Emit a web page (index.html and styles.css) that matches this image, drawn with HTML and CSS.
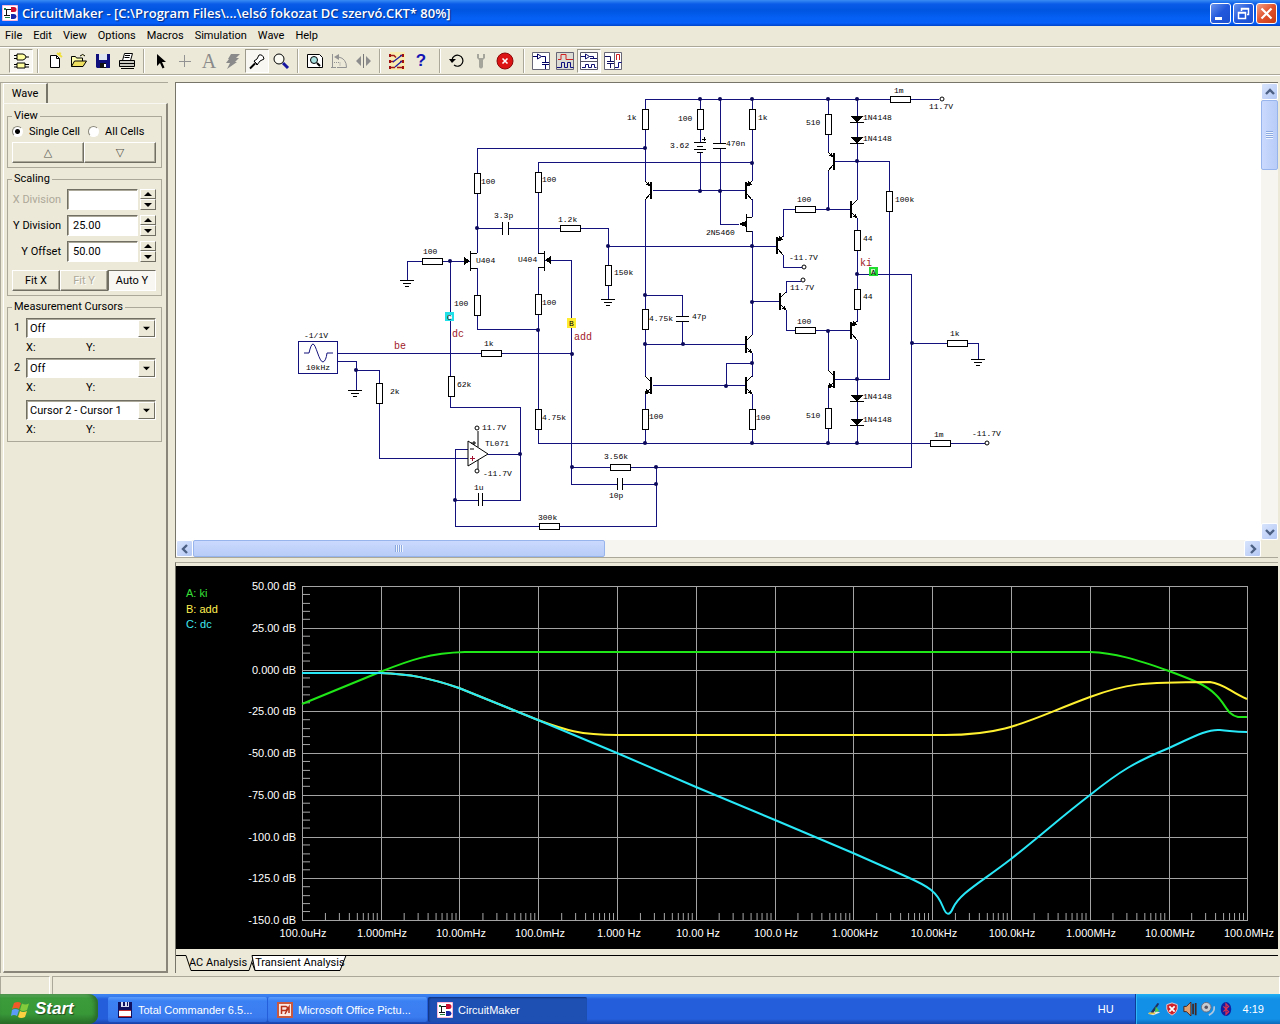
FILE: index.html
```html
<!DOCTYPE html>
<html lang="en">
<head>
<meta charset="utf-8">
<title>CircuitMaker</title>
<link rel="stylesheet" href="styles.css">
</head>
<body>
<svg class="defs" width="0" height="0" aria-hidden="true">
  <defs>
    <symbol id="logo" viewBox="0 0 16 16"><path fill="#fff" stroke="#f9b8d8" d="M.5.5h15v15H.5z"/><path d="M2 4.500h8M4.500 4v7M2 10.500h6" stroke="#111" fill="none"/><path d="M9 2h3a2.500 2.500 0 0 1 0 5H9z" fill="#d01030"/><path d="M9 9h3a2.500 2.500 0 0 1 0 5H9z" fill="#1828a8"/><path d="M2 3h2v2H2zM3 12h5v1H3z" fill="#208040"/></symbol>
    <symbol id="up" viewBox="0 0 8 8"><path d="M0 6h8L4 2z"/></symbol>
    <symbol id="down" viewBox="0 0 8 8"><path d="M0 2h8L4 6z"/></symbol>
    <symbol id="chev" viewBox="0 0 10 10"><path d="M1 7l4-4 4 4" fill="none" stroke="#4d6185" stroke-width="2.400"/></symbol>
  </defs>
</svg>

<header class="titlebar">
  <svg class="ico16"><use href="#logo"/></svg>
  <h1>CircuitMaker - [C:\Program Files\...\első fokozat DC szervó.CKT* 80%]</h1>
  <div class="winbtns">
    <button aria-label="Minimize"><svg width="19" height="19"><path d="M4 13h7v3H4z" fill="#fff"/></svg></button>
    <button aria-label="Restore"><svg width="19" height="19" fill="none" stroke="#fff"><path d="M4.500 8.500h7v6h-7zM4 9h8M7.500 7V4.500h7v6H13M7 5h8" stroke-width="1.500"/></svg></button>
    <button class="close" aria-label="Close"><svg width="19" height="19"><path d="M4.500 4.500l10 10M14.500 4.500l-10 10" stroke="#fff" stroke-width="2.200"/></svg></button>
  </div>
</header>

<nav class="menubar">
  <a href="#">File</a><a href="#">Edit</a><a href="#">View</a><a href="#">Options</a><a href="#">Macros</a><a href="#">Simulation</a><a href="#">Wave</a><a href="#">Help</a>
</nav>

<div class="toolbar" role="toolbar" aria-label="Tools">
  <button class="on" aria-label="Parts"><svg viewBox="0 0 18 18"><path d="M5 2h6q3 1 3 3t-3 3H5zM5 11h8v5H5z" fill="#ffffa0" stroke="#000"/><path d="M2 3.500h3M2 6.500h3M14 5h3M2 12.500h3M2 15h3M13 12.500h4M13 15h4" stroke="#000"/></svg></button>
  <i class="sep"></i>
  <button aria-label="New"><svg viewBox="0 0 18 18"><path d="M11 1l5 4M13 1l2 1" stroke="#f0e040" stroke-width="2"/><path d="M4.500 3.500h6l3 3v9h-9z" fill="#fff" stroke="#000"/><path d="M10.500 3.500v3h3" fill="none" stroke="#000"/></svg></button>
  <button aria-label="Open"><svg viewBox="0 0 18 18"><path d="M1.500 14.500v-10h4l1 1.500h6v3M10 4q3-3 5 0" fill="#ffffb0" stroke="#000"/><path d="M1.500 14.500l3-5.500h12l-3.500 5.500z" fill="#f0e060" stroke="#000"/></svg></button>
  <button aria-label="Save"><svg viewBox="0 0 18 18"><path d="M2 2h14v14H3l-1-1z" fill="#10107c"/><path d="M5 2h8v6H5z" fill="#dfe6f0"/><path d="M6 11h6v5H6z" fill="#111"/><path d="M10 12h2v3h-2z" fill="#fff"/></svg></button>
  <button aria-label="Print"><svg viewBox="0 0 18 18"><path d="M4.500 8.500l2-7h8l-2 7z" fill="#fff" stroke="#000"/><path d="M1.500 8.500h15v6h-15z" fill="#c8c8c0" stroke="#000"/><path d="M7 3.500h5M6.500 5.500h5M2 11.500h14M3 16.500h13" stroke="#000"/></svg></button>
  <i class="sep"></i>
  <button aria-label="Arrow"><svg viewBox="0 0 18 18"><path d="M5 2v12l3-3 2.500 5.500 2-1L10 10h4z"/></svg></button>
  <button aria-label="Wire"><svg viewBox="0 0 18 18"><path d="M8.500 3v12M3 9.500h12" stroke="#929292"/></svg></button>
  <button class="letter" aria-label="Text">A</button>
  <button aria-label="Delete"><svg viewBox="0 0 18 18"><path d="M7 2h9l-4 4h3l-4 4h2L3 17l3-6H2l3-4H4z" fill="#8a8a8a"/></svg></button>
  <button class="on" aria-label="Probe"><svg viewBox="0 0 18 18"><path d="M2 16.500l5-5" stroke="#000" stroke-width="2"/><path d="M6 9l3-2 2-4q4-1 5 4l-4 2-3 4z" fill="#fff" stroke="#000"/><path d="M6 9l4 4" stroke="#000"/></svg></button>
  <button aria-label="Zoom"><svg viewBox="0 0 18 18"><path d="M11 11l5 5" stroke="#1515a0" stroke-width="3"/><circle cx="7" cy="7" r="5" fill="#fbfbf4" stroke="#000"/></svg></button>
  <i class="sep"></i>
  <button aria-label="Fit"><svg viewBox="0 0 18 18"><path d="M1.500 2.500h12l3 3v10h-15z" fill="#fff" stroke="#000"/><circle cx="8" cy="8" r="3.500" fill="#a8e0e0" stroke="#000"/><path d="M11 11l3 3" stroke="#000" stroke-width="2"/></svg></button>
  <button aria-label="Rotate"><svg viewBox="0 0 18 18"><path d="M2.500 2v13.500M1 15.500h5M7 15.500h9.500q0-9-8-10.500" fill="none" stroke="#939393"/><path d="M4 5l5-3v6z" fill="#939393"/><path d="M4 10.500h6v4" fill="none" stroke="#939393" stroke-dasharray="1 1"/></svg></button>
  <button aria-label="Mirror"><svg viewBox="0 0 18 18"><path d="M7 4v10L2 9zM12 4v10l5-5z" fill="#8d8d8d"/><path d="M9.500 2v14" stroke="#777"/></svg></button>
  <i class="sep"></i>
  <button aria-label="Digital options"><svg viewBox="0 0 18 18"><path d="M2 0h15v18H2z" fill="#f8ecb0"/><path d="M2 3.500h4l2 2M2 9.500h4M2 15.500h5M12 3.500h4M12 9.500h4M9 15.500h7" fill="none" stroke="#a01818" stroke-width="1.500"/><path d="M5 10l9-7M7 15l7-6" stroke="#2020a0" stroke-width="1.300"/><path d="M14 2h2v3h-2zM14 8h2v3h-2zM14 14h2v3h-2zM1 2h2v3H1zM1 8h2v3H1zM1 14h2v3H1z" fill="#a01010"/></svg></button>
  <button class="help" aria-label="Help">?</button>
  <i class="sep wide"></i>
  <button aria-label="Reset"><svg viewBox="0 0 18 18"><path d="M4 8a5.500 5.500 0 1 1 2 5" fill="none" stroke="#000" stroke-width="1.200"/><path d="M1 7h7l-4 4z"/></svg></button>
  <button aria-label="Step"><svg viewBox="0 0 18 18"><path d="M5 2v4l2 2v7q2 3 4 0V8l2-2V2h-2v4H7V2z" fill="#a5a59c"/></svg></button>
  <button aria-label="Stop"><svg viewBox="0 0 18 18"><circle cx="9" cy="9" r="8" fill="#dc1414" stroke="#8c0808"/><path d="M6.500 6.500l5 5M11.500 6.500l-5 5" stroke="#fff" stroke-width="1.600"/></svg></button>
  <i class="sep wide"></i>
  <button aria-label="Schematic"><svg viewBox="0 0 18 18"><path d="M.5.500h17v17H.5z" fill="#fff" stroke="#667"/><path d="M1 4.500h4M5.500 2v5l4-2.500zM9.500 4.500h4v6M10 10.500h7M10 12.500h7M13.500 13v4" fill="none" stroke="#000064"/></svg></button>
  <button aria-label="Waveforms"><svg viewBox="0 0 18 18"><path d="M.5.500h17v17H.5z" fill="#dcdcd4" stroke="#667"/><path d="M2 7.500h3v-5h5v5h7" fill="none" stroke="#d02020"/><path d="M1 15.500h4.500v-5h3v5h3v-5h3v5h3" fill="none" stroke="#101080"/></svg></button>
  <button class="on" aria-label="Split horizontally"><svg viewBox="0 0 18 18"><path d="M.5.500h17v17H.5zM0 9.500h18" fill="#fff" stroke="#556"/><path d="M1 4.500h4M5.500 2v5l4-2.500zM9.500 4.500h4v2M10 6.500h7M2 15.500h3.500v-3h3v3h3v-3h3v3h2" fill="none" stroke="#101070"/></svg></button>
  <button aria-label="Split vertically"><svg viewBox="0 0 18 18"><path d="M.5.500h17v17H.5zM10.500 0v18" fill="#fff" stroke="#667"/><path d="M1 4.500h5.500v5M3 9.500h7M3 11.500h7M6.500 12v4" fill="none" stroke="#101060"/><path d="M12.500 8V2.500h3V8" fill="none" stroke="#d02020"/><path d="M11 15.500h3.500v-5h3" fill="none" stroke="#101080"/></svg></button>
</div>

<main class="work">
  <aside class="side">
    <div class="tabrow"><button class="tab">Wave</button></div>
    <div class="panel">
      <fieldset>
        <legend>View</legend>
        <div class="radios">
          <label><input type="radio" name="cells" checked>Single Cell</label>
          <label><input type="radio" name="cells">All Cells</label>
        </div>
        <div class="pair"><button class="btn" aria-label="Previous cell">△</button><button class="btn" aria-label="Next cell">▽</button></div>
      </fieldset>
      <fieldset>
        <legend>Scaling</legend>
        <div class="rows">
          <div class="row off"><label for="xd">X Division</label><input id="xd" type="text" disabled><span class="spin"><button aria-label="X up"><svg><use href="#up"/></svg></button><button aria-label="X down"><svg><use href="#down"/></svg></button></span></div>
          <div class="row"><label for="yd">Y Division</label><input id="yd" type="text" value="25.00"><span class="spin"><button aria-label="Y up"><svg><use href="#up"/></svg></button><button aria-label="Y down"><svg><use href="#down"/></svg></button></span></div>
          <div class="row"><label for="yo">Y Offset</label><input id="yo" type="text" value="50.00"><span class="spin"><button aria-label="Offset up"><svg><use href="#up"/></svg></button><button aria-label="Offset down"><svg><use href="#down"/></svg></button></span></div>
        </div>
        <div class="pair fit"><button class="btn">Fit X</button><button class="btn" disabled>Fit Y</button><button class="btn down">Auto Y</button></div>
      </fieldset>
      <fieldset class="cursors">
        <legend>Measurement Cursors</legend>
        <div class="cur"><label for="c1">1</label><span class="combo"><select id="c1"><option>Off</option></select><svg><use href="#down"/></svg></span></div>
        <div class="xy"><span>X:</span><span>Y:</span></div>
        <div class="cur"><label for="c2">2</label><span class="combo"><select id="c2"><option>Off</option></select><svg><use href="#down"/></svg></span></div>
        <div class="xy"><span>X:</span><span>Y:</span></div>
        <div class="cur diff"><span></span><span class="combo"><select aria-label="Difference"><option>Cursor 2 - Cursor 1</option></select><svg><use href="#down"/></svg></span></div>
        <div class="xy"><span>X:</span><span>Y:</span></div>
      </fieldset>
    </div>
  </aside>

  <section class="docs">
    <div class="sheet">
      <div class="canvas">
      <svg class="schem" width="1085" height="457" viewBox="176 83 1085 457">
        <defs>
          <g id="rv"><path d="M-3-10h6v20h-6z"/></g>
          <g id="rh"><path d="M-10-3h20v6h-20z"/></g>
          <g id="gnd"><path d="M-7 0H7M-4 3H4M-2 6H2"/></g>
          <g id="npn"><path d="M1-4L6-9M1 4l5 5"/><path class="ink" d="M-1-8h2V9h-2zM6 9L1 8l4-4z"/></g>
          <g id="pnp"><path d="M1-4L6-9M1 4l5 6"/><path class="ink" d="M-1-8h2V9h-2zM1-4l1-5 4 4z"/></g>
          <g id="dio"><path class="ink" d="M-6-3H6L1 3h6v1H-7V3h6z"/></g>
          <circle id="n" r="2"/>
        </defs>
        <g class="wire">
          <path d="M477 253V148H645M538 253V162H752M477 268V329H538M538 267V443H985M477 228H502M508 228H608V299M608 246H777M407 280V261H470M450 261V407H520V500H482M478 500H455M468 449H455V526H656V467M338 353H572M338 361H356V390M356 370H379V458H468M488 454H520M545 260H571V484H617M622 484H656M572 467H911V274H857"/>
          <path d="M645 181V99H939M700 99V142M700 152V190M720 99V143M720 148V224H739M752 99V181M752 199V217M752 231V335M653 190H746M645 199V377M645 394V443M645 295H682V316M682 321V344M645 344H746M752 353V377M752 363H726V386M653 385H746M752 394V443"/>
          <path d="M783 237V209H850M783 255V267H802M786 293V281H801M786 310V330H850M752 301H779M828 99V152M828 170V209M834 161H889V379H834M857 99V200M857 218V322M857 340V443M828 330V370M828 388V443M911 343H978V359"/>
          <path class="box" d="M298 341h39v32h-39z"/>
        </g>
        <g class="curve"><path d="M304 353h5q2-9 4-9c3 0 6 18 10 18q3-1 4-9h6"/></g>
        <g class="dots">
          <use href="#n" x="477" y="228"/><use href="#n" x="450" y="261"/><use href="#n" x="538" y="330"/><use href="#n" x="572" y="354"/><use href="#n" x="356" y="370"/><use href="#n" x="520" y="454"/><use href="#n" x="455" y="500"/><use href="#n" x="572" y="467"/><use href="#n" x="656" y="467"/><use href="#n" x="656" y="484"/><use href="#n" x="608" y="246"/><use href="#n" x="645" y="148"/><use href="#n" x="700" y="99"/><use href="#n" x="720" y="99"/><use href="#n" x="752" y="99"/><use href="#n" x="828" y="99"/><use href="#n" x="857" y="99"/><use href="#n" x="752" y="163"/><use href="#n" x="700" y="191"/><use href="#n" x="720" y="191"/><use href="#n" x="752" y="246"/><use href="#n" x="752" y="302"/><use href="#n" x="645" y="295"/><use href="#n" x="645" y="344"/><use href="#n" x="683" y="344"/><use href="#n" x="752" y="363"/><use href="#n" x="726" y="386"/><use href="#n" x="645" y="443"/><use href="#n" x="752" y="443"/><use href="#n" x="828" y="443"/><use href="#n" x="857" y="443"/><use href="#n" x="828" y="209"/><use href="#n" x="828" y="331"/><use href="#n" x="857" y="161"/><use href="#n" x="857" y="274"/><use href="#n" x="857" y="379"/><use href="#n" x="912" y="343"/>
        </g>
        <g class="parts">
          <use href="#rv" x="477" y="183"/><use href="#rv" x="538" y="182"/><use href="#rv" x="477" y="305"/><use href="#rv" x="538" y="304"/><use href="#rv" x="608" y="275"/><use href="#rv" x="451" y="386"/><use href="#rv" x="379" y="393"/><use href="#rv" x="538" y="419"/><use href="#rv" x="645" y="119"/><use href="#rv" x="700" y="119"/><use href="#rv" x="752" y="119"/><use href="#rv" x="828" y="124"/><use href="#rv" x="889" y="201"/><use href="#rv" x="857" y="240"/><use href="#rv" x="857" y="299"/><use href="#rv" x="645" y="319"/><use href="#rv" x="645" y="419"/><use href="#rv" x="752" y="419"/><use href="#rv" x="828" y="418"/>
          <use href="#rh" x="432" y="261"/><use href="#rh" x="570" y="228"/><use href="#rh" x="491" y="353"/><use href="#rh" x="620" y="467"/><use href="#rh" x="549" y="526"/><use href="#rh" x="900" y="99"/><use href="#rh" x="805" y="209"/><use href="#rh" x="805" y="330"/><use href="#rh" x="957" y="343"/><use href="#rh" x="940" y="443"/>
          <use href="#gnd" x="407" y="280"/><use href="#gnd" x="608" y="299"/><use href="#gnd" x="355" y="390"/><use href="#gnd" x="978" y="359"/>
          <path d="M502 222v13M508 222v13M478 493v13M482 493v13M617 478v12M622 478v12M713 143h13M713 148h13M676 316h13M676 321h13M694 142h12M697 146h6M694 149h12M697 152h6M702 139h4M704 137v4"/>
          <path d="M470 251v20M470 253h7M470 268h7M544 251v20M544 253h-6M544 267h-6M746 214v18M746 217h6M746 231h6"/>
          <path class="ink" d="M464 257l6 4-6 4zM551 256l-6 4 6 4zM739 224l7-3v6z"/>
          <path class="smooth" d="M468 441v25l20-12zM478 431v16M478 460v9M471 443h5M474 441v4M470 449h4"/>
          <path class="plus" d="M470 458h5M472 456v5"/>
          <use href="#npn" x="746" y="344"/><use href="#npn" x="746" y="385"/><use href="#npn" x="780" y="301"/><use href="#npn" x="851" y="209"/><use href="#pnp" x="851" y="330"/><use href="#pnp" x="746" y="190"/><use href="#pnp" x="777" y="245"/>
          <use href="#pnp" transform="matrix(-1 0 0 1 651 190)"/><use href="#npn" transform="matrix(-1 0 0 1 651 385)"/><use href="#pnp" transform="matrix(-1 0 0 1 834 161)"/><use href="#npn" transform="matrix(-1 0 0 1 834 379)"/>
          <use href="#dio" x="857" y="119"/><use href="#dio" x="857" y="140"/><use href="#dio" x="857" y="398"/><use href="#dio" x="857" y="422"/>
          <g class="smooth"><circle cx="942" cy="99" r="2"/><circle cx="804" cy="267" r="2"/><circle cx="803" cy="280" r="2"/><circle cx="987" cy="443" r="2"/><circle cx="477" cy="428" r="2"/><circle cx="477" cy="471" r="2"/></g>
        </g>
        <g class="lbl">
          <text x="481" y="184">100</text><text x="542" y="182">100</text><text x="494" y="218">3.3p</text><text x="558" y="222">1.2k</text><text x="423" y="254">100</text><text x="476" y="263">U404</text><text x="518" y="262">U404</text><text x="614" y="275">150k</text><text x="454" y="306">100</text><text x="542" y="305">100</text><text x="304" y="338">-1/1V</text><text x="306" y="370">10kHz</text><text x="484" y="346">1k</text><text x="457" y="387">62k</text><text x="390" y="394">2k</text><text x="542" y="420">4.75k</text><text x="482" y="430">11.7V</text><text x="485" y="446">TL071</text><text x="483" y="476">-11.7V</text><text x="474" y="490">1u</text><text x="604" y="459">3.56k</text><text x="609" y="498">10p</text><text x="538" y="520">300k</text>
          <text x="627" y="120">1k</text><text x="678" y="121">100</text><text x="758" y="120">1k</text><text x="670" y="148">3.62</text><text x="726" y="146">470n</text><text x="806" y="125">510</text><text x="863" y="120">1N4148</text><text x="863" y="141">1N4148</text><text x="894" y="93">1m</text><text x="929" y="109">11.7V</text><text x="706" y="235">2N5460</text><text x="797" y="202">100</text><text x="895" y="202">100k</text><text x="863" y="241">44</text><text x="789" y="260">-11.7V</text><text x="790" y="290">11.7V</text><text x="649" y="321">4.75k</text><text x="692" y="319">47p</text><text x="797" y="324">100</text><text x="863" y="299">44</text><text x="950" y="336">1k</text><text x="649" y="419">100</text><text x="756" y="420">100</text><text x="806" y="418">510</text><text x="863" y="399">1N4148</text><text x="863" y="422">1N4148</text><text x="934" y="437">1m</text><text x="972" y="436">-11.7V</text>
        </g>
        <g class="net"><text x="394" y="349">be</text><text x="452" y="337">dc</text><text x="574" y="340">add</text><text x="860" y="266">ki</text></g>
        <g class="probe">
          <path fill="#22e0e8" d="M445 312h9v9h-9z"/><path fill="#ffec30" d="M567 318h9v10h-9z"/><path fill="#20dc30" d="M869 267h9v9h-9z"/>
          <path fill="#fff" d="M448 315h4v4h-4z"/><path fill="#c8f8c0" d="M871 269h4v5h-4z"/>
          <text x="447" y="320">C</text><text x="569" y="326">B</text><text x="871" y="275">A</text>
        </g>
      </svg>
      </div>
      <div class="vbar"><button aria-label="Scroll up"><svg><use href="#chev"/></svg></button><div class="thumb"></div><button class="end" aria-label="Scroll down"><svg><use href="#chev"/></svg></button></div>
      <div class="hbar"><button aria-label="Scroll left"><svg><use href="#chev"/></svg></button><div class="thumb"></div><button class="end" aria-label="Scroll right"><svg><use href="#chev"/></svg></button></div>
    </div>

    <div class="plotpane">
      <svg class="plot" viewBox="176 566 1102 383">
        <defs>
          <pattern id="dec" x="302" y="913" width="78.750" height="7" patternUnits="userSpaceOnUse"><path d="M23.700 0v7M37.600 0v7M47.400 0v7M55 0v7M61.300 0v7M66.500 0v7M71.100 0v7M75.100 0v7" stroke="#a8a8a8"/></pattern>
          <pattern id="min" x="303" y="586" width="7" height="41.750" patternUnits="userSpaceOnUse"><path d="M0 8.500h7M0 17.500h7M0 25.500h7M0 33.500h7" stroke="#a8a8a8"/></pattern>
        </defs>
        <g class="grid">
          <path d="M302 586H1248M302 628H1248M302 670H1248M302 711H1248M302 753H1248M302 795H1248M302 837H1248M302 878H1248M302 920H1248M302 586V920M381 586V920M459 586V920M538 586V920M617 586V920M696 586V920M775 586V920M853 586V920M932 586V920M1011 586V920M1090 586V920M1169 586V920M1247 586V920"/>
        </g>
        <path fill="url(#dec)" d="M302 913h945v7H302z"/><path fill="url(#min)" d="M303 586h7v334h-7z"/>
        <g class="trace">
          <path stroke="#20e818" d="M302 704L380 672C410 660 430 653 465 652H1090C1115 653 1135 659 1169 671C1190 679 1205 684 1215 694C1226 704 1227 715 1238 717H1247"/>
          <path stroke="#fff030" d="M302 673H380C410 674 430 678 459 688L538 720C565 730 580 735 617 735H945C1010 735 1030 719 1090 697C1125 684 1140 682 1210 682C1225 684 1230 692 1247 699"/>
          <path stroke="#28e8f8" d="M302 673H380C410 674 430 678 459 688L538 720L617 753L696 787L775 820L853 853L905 876C930 887 937 892 943 907Q948 920 953 908C960 893 980 883 1011 859C1045 832 1060 818 1090 795C1120 771 1135 762 1169 748C1195 736 1208 729 1220 730C1232 731 1235 732 1247 732"/>
        </g>
        <g class="ylab"><text x="296" y="590">50.00 dB</text><text x="296" y="632">25.00 dB</text><text x="296" y="674">0.000 dB</text><text x="296" y="715">-25.00 dB</text><text x="296" y="757">-50.00 dB</text><text x="296" y="799">-75.00 dB</text><text x="296" y="841">-100.0 dB</text><text x="296" y="882">-125.0 dB</text><text x="296" y="924">-150.0 dB</text></g>
        <g class="xlab"><text x="303" y="937">100.0uHz</text><text x="382" y="937">1.000mHz</text><text x="461" y="937">10.00mHz</text><text x="540" y="937">100.0mHz</text><text x="619" y="937">1.000 Hz</text><text x="698" y="937">10.00 Hz</text><text x="776" y="937">100.0 Hz</text><text x="855" y="937">1.000kHz</text><text x="934" y="937">10.00kHz</text><text x="1012" y="937">100.0kHz</text><text x="1091" y="937">1.000MHz</text><text x="1170" y="937">10.00MHz</text><text x="1249" y="937">100.0MHz</text></g>
        <g class="leg"><text x="186" y="597" fill="#38e038">A: ki</text><text x="186" y="613" fill="#fff050">B: add</text><text x="186" y="628" fill="#40e8f0">C: dc</text></g>
      </svg>
      <div class="sheets">
        <svg width="1102" height="17" class="shape"><path class="edge" d="M0 .500h10l5 15h58l5-15h90l-5 15H79l-3-8M168 .500h934" /><path d="M76 .500h94l-6 15H79z" fill="#fff" stroke="#000"/></svg>
        <div class="names"><button>AC Analysis</button><button>Transient Analysis</button></div>
      </div>
    </div>
  </section>
</main>

<div class="status"><span></span><span></span></div>

<footer class="taskbar">
  <button class="start"><svg width="19" height="18" viewBox="0 0 19 18"><path d="M3 3q4-2 7 0L8 9q-3-2-7 0z" fill="#f05a28"/><path d="M11 3.500q3 2 7 0L16 10q-4 2-7 0z" fill="#84cc3c"/><path d="M1 10q3-2 7 0l-2 6q-3-2-6 0z" fill="#5c9cf8"/><path d="M9 11q3 2 7 0l-2 6q-4 2-7 0z" fill="#fcd040"/></svg>Start</button>
  <div class="tasks">
    <button><svg class="ico16" viewBox="0 0 16 16"><path fill="#101060" d="M1 0h14v16H1z"/><path fill="#d8dcf0" d="M4 0h8v5H4z"/><path fill="#101060" d="M6 0h2v4H6zM10 0h1v4h-1z"/><path fill="#fff" d="M2 8h12v7H2z"/><path stroke="#c83030" d="M2 8.500h12M2 14.500h12"/></svg>Total Commander 6.5...</button>
    <button><svg class="ico16" viewBox="0 0 16 16"><path fill="#fbe8e2" stroke="#c85840" stroke-width="2" d="M1 1h14v14H1z"/><path d="M4.500 12V4.500H9q3 1 0 4H5M8 12l4-7v6" fill="none" stroke="#b83018" stroke-width="1.500"/></svg>Microsoft Office Pictu...</button>
    <button class="active"><svg class="ico16"><use href="#logo"/></svg>CircuitMaker</button>
  </div>
  <span class="lang">HU</span>
  <div class="tray">
    <svg viewBox="0 0 16 16"><path d="M1 13l8-3 6 2-8 3z" fill="#e8e8e8"/><path d="M4 12l8-11 2 1-7 11z" fill="#203060"/><path d="M10 5l4 5-5 2z" fill="#48c850"/><path d="M2 12h7v2H2z" fill="#e0c040"/></svg>
    <svg viewBox="0 0 16 16"><path d="M8 1l6 2v5q-1 5-6 7-5-2-6-7V3z" fill="#d02028" stroke="#f0d0d0"/><path d="M5 5l6 6M11 5l-6 6" stroke="#fff" stroke-width="2"/></svg>
    <svg viewBox="0 0 16 16"><path d="M1 5h3l5-5v16l-5-5H1z" fill="#e0a070" stroke="#401810"/><path d="M11.500 2v12M14.500 1v14" stroke="#402828" stroke-width="2"/></svg>
    <svg viewBox="0 0 16 16"><circle cx="6" cy="6" r="5.500" fill="#c8ccd0" stroke="#667"/><circle cx="6" cy="6" r="2" fill="#556"/><path d="M9 15q7-3 6-10" fill="none" stroke="#b0c8e0" stroke-width="2"/></svg>
    <svg viewBox="0 0 16 16"><ellipse cx="8" cy="8" rx="6" ry="8" fill="#1020a0"/><path d="M5 5l6 6-3 3V2l3 3-6 6" fill="none" stroke="#e03050" stroke-width="1.400"/></svg>
    <time>4:19</time>
  </div>
</footer>
</body>
</html>
```
FILE: styles.css
```css
* { box-sizing: border-box; }
html, body { margin: 0; }
body {
  min-height: 100vh;
  display: flex;
  flex-direction: column;
  background: #ece9d8;
  color: #000;
  font: 11px/14px "Liberation Sans", Arial, sans-serif;
}
button, input, select { font: inherit; color: inherit; margin: 0; padding: 0; border: 0; border-radius: 0; background: none; }
svg { display: block; flex: none; }
.defs { position: absolute; }
.ico16 { width: 16px; height: 16px; }

.titlebar {
  height: 26px;
  display: flex;
  align-items: center;
  gap: 4px;
  padding: 0 3px 0 2px;
  background: linear-gradient(#3a8cf4 0, #0a5ce8 4px, #0055e0 10px, #0560f4 18px, #0660fa 23px, #0044c8 26px);
}
.titlebar h1 { flex: 1; margin: 0; color: #fff; font: 600 13px/20px "Open Sans", "Noto Sans", sans-serif; text-shadow: 1px 1px 1px #0a2a80; white-space: nowrap; }
.winbtns { display: flex; gap: 2px; }
.winbtns button { width: 21px; height: 21px; border: 1px solid #fff; border-radius: 3px; background: linear-gradient(135deg, #6a94ec, #2258dc 50%, #1c50d0); }
.winbtns .close { background: linear-gradient(135deg, #f0a088, #e0522c 50%, #c83c14); }

.menubar { height: 20px; display: flex; gap: 11px; padding: 0 5px; align-items: center; font: 11px/14px Roboto, "Liberation Sans", sans-serif; }
.menubar a { color: #000; text-decoration: none; }

.toolbar { height: 29px; display: flex; align-items: center; padding-left: 9px; border-top: 1px solid #aca899; border-bottom: 1px solid #aca899; box-shadow: inset 0 1px #fff, 0 1px #fff; }
.toolbar button { width: 24px; height: 24px; display: grid; place-items: center; border: 1px solid transparent; }
.toolbar svg { width: 18px; height: 18px; }
.toolbar .on { background: #f8f7f2; border-color: #9d9a8c #fff #fff #9d9a8c; }
.toolbar .letter { font: 20px/20px "Liberation Serif", serif; color: #8a8a8a; }
.toolbar .help { font: bold 17px/20px "Liberation Sans", sans-serif; color: #1414b4; }
.sep { width: 10px; height: 24px; background: linear-gradient(90deg, #aca899 1px, #fff 1px) 4px 0 / 2px 100% no-repeat; }
.sep.wide { width: 12px; background-position: 6px 0; }

.work { flex: 1; display: grid; grid-template-columns: 168px minmax(0, 1fr); column-gap: 7px; padding: 7px 2px 0 0; }
.side { display: flex; flex-direction: column; padding-left: 2px; border-left: 1px solid #aca899; border-top: 1px solid #aca899; font-family: Roboto, "Liberation Sans", sans-serif; }
.tabrow { height: 20px; display: flex; }
.tab { width: 45px; border-right: 2px solid #77746a; border-top: 1px solid #fff; border-left: 1px solid #fff; }
.panel { flex: 1; border: 1px solid #fff; border-top-color: #f8f7f2; border-right: 2px solid #8a877a; border-bottom: 2px solid #8a877a; padding: 5px 4px 0 3px; }
fieldset { min-width: 0; margin: 0 0 4px; padding: 0 5px 4px 4px; border: 1px solid #aca899; }
legend { padding: 0 2px; line-height: 14px; }
.radios { display: flex; height: 19px; padding-bottom: 2px; align-items: center; gap: 8px; white-space: nowrap; }
.radios label { display: flex; align-items: center; gap: 6px; }
.radios input { appearance: none; width: 11px; height: 11px; border: 1px solid #8a877a; border-right-color: #fff; border-bottom-color: #fff; border-radius: 50%; background: #fff; }
.radios input:checked { background: radial-gradient(circle, #000 2px, #fff 3px); }
.pair { display: grid; grid-auto-flow: column; grid-auto-columns: 1fr; }
.btn { height: 21px; border: 1px solid; border-color: #fff #716f64 #716f64 #fff; box-shadow: inset -1px -1px #aca899; }
.pair [aria-label] { font: 11px/12px "DejaVu Sans", sans-serif; color: #55534c; }
.btn:disabled { color: #aca899; text-shadow: 1px 1px #fff; }
.btn.down { background: #f8f7f2; border-color: #716f64 #fff #fff #716f64; box-shadow: none; }
.rows { display: grid; gap: 5px; padding: 3px 0 8px; }
.row { display: grid; grid-template-columns: 53px 71px 16px; column-gap: 2px; align-items: center; }
.row label { text-align: right; padding-right: 4px; white-space: nowrap; }
.row.off label { color: #aca899; }
.row input { height: 21px; padding: 0 5px; background: #fff; min-width: 0; }
.row input, .combo { border: 1px solid; border-color: #716f64 #fff #fff #716f64; box-shadow: inset 1px 1px #aca899; }
.spin { display: grid; grid-template-rows: 10px 11px; }
.spin button { display: grid; place-items: center; border: 1px solid; border-color: #fff #716f64 #716f64 #fff; }
.spin svg { width: 8px; height: 8px; }
.cursors { padding-top: 4px; padding-bottom: 1px; }
.cur { display: grid; grid-template-columns: 14px 1fr; align-items: center; }
.cur label { padding-left: 2px; }
.cur.diff { margin-top: 2px; }
.combo { display: grid; grid-template-columns: 1fr 17px; height: 20px; padding: 1px 0 0 1px; background: #fff; }
.combo select { appearance: none; grid-area: 1 / 1 / 2 / 3; padding-left: 2px; background: none; }
.combo svg { grid-area: 1 / 2; width: 17px; height: 17px; padding: 4px; pointer-events: none; background: #ece9d8; border: 1px solid; border-color: #fff #716f64 #716f64 #fff; }
.xy { display: grid; grid-template-columns: 60px 1fr; height: 20px; line-height: 20px; padding-left: 14px; }

.docs { display: flex; flex-direction: column; }
.sheet { display: grid; grid-template-columns: minmax(0, 1fr) 17px; grid-template-rows: 457px 17px; border: 1px solid #77746a; border-right: 0; border-bottom-color: #aca899; }
.canvas { background: #fff; overflow: hidden; }
.vbar, .hbar { display: flex; background: #f6f5ef; }
.vbar { flex-direction: column; }
.vbar button, .hbar button { flex: none; width: 17px; height: 17px; display: grid; place-items: center; border: 1px solid #fff; border-radius: 2px; background: linear-gradient(135deg, #d8e4fd, #b4c8f4); }
.vbar svg, .hbar svg { width: 10px; height: 10px; }
.vbar .end svg { transform: rotate(180deg); }
.hbar svg { transform: rotate(-90deg); }
.hbar .end svg { transform: rotate(90deg); }
.end { margin-top: auto; }
.hbar .end { margin: 0 0 0 auto; }
.thumb { border: 1px solid #98b4ec; border-radius: 2px; }
.vbar .thumb { height: 70px; background: repeating-linear-gradient(#8ca8e0 0 1px, #eef4fe 1px 2px) center / 7px 8px no-repeat, linear-gradient(90deg, #cad9fd, #b8ccf8); }
.hbar .thumb { width: 38%; background: repeating-linear-gradient(90deg, #8ca8e0 0 1px, #eef4fe 1px 2px) center / 8px 7px no-repeat, linear-gradient(#cad9fd, #b8ccf8); }

.wire, .parts { fill: none; stroke: #14127c; stroke-width: 1; shape-rendering: crispEdges; }
.box { fill: #fff; }
.curve { fill: none; stroke: #14127c; }
.dots { fill: #0c0a5c; }
.parts { stroke: #000; }
.parts use { fill: #fff; }
.parts .ink, .ink { fill: #000; stroke: none; }
.smooth { fill: #fff; shape-rendering: auto; }
.plus { stroke: #a01030; }
.lbl, .probe text { font: 8px "Liberation Mono", monospace; fill: #000; }
.net { font: 10px "Liberation Mono", monospace; fill: #a02028; }

.plotpane { flex: 1; margin-top: 4px; padding-top: 3px; border-top: 1px solid #aca899; border-left: 1px solid #77746a; }
.plot { width: 100%; height: auto; background: #000; shape-rendering: crispEdges; }
.grid { stroke: #a4a4a4; }
.trace { fill: none; stroke-width: 2; shape-rendering: auto; }
.ylab, .xlab { fill: #fff; text-anchor: end; }
.xlab { text-anchor: middle; }
.sheets { margin-top: 6px; height: 17px; display: grid; overflow: hidden; }
.shape { grid-area: 1 / 1; }
.edge { fill: none; stroke: #000; }
.names { grid-area: 1 / 1; display: flex; gap: 8px; padding-left: 13px; font-family: Roboto, "Liberation Sans", sans-serif; }
.names button { height: 16px; white-space: nowrap; }

.status { height: 18px; margin-top: 3px; display: grid; grid-template-columns: 50px 1fr; gap: 2px; }
.status span { border-top: 1px solid #aca899; border-left: 1px solid #aca899; border-right: 1px solid #fff; }

.taskbar { height: 30px; display: flex; align-items: stretch; color: #fff; background: linear-gradient(#3a80f0 0, #3a80f0 2px, #245edb 5px, #245edb 25px, #1941a5 30px); }
.start { width: 98px; display: flex; align-items: center; gap: 5px; padding-left: 11px; border-radius: 0 9px 9px 0; background: linear-gradient(#6cb86c 0, #3c9c3c 4px, #389838 20px, #286c28 30px); box-shadow: inset -3px 0 4px #2a6a2a; font: italic bold 17px/20px "Liberation Sans", sans-serif; text-shadow: 1px 1px 1px #204820; }
.tasks { flex: 1; display: flex; gap: 1px; padding: 3px 0 2px 10px; }
.tasks button { width: 159px; display: flex; align-items: center; gap: 5px; padding-left: 9px; border-radius: 2px; background: linear-gradient(#5a9cfc 0, #3c81f3 4px, #3a7cf0 20px, #2c68dc); white-space: nowrap; }
.tasks .active { background: #1e50b4; box-shadow: inset 1px 1px 2px #103078; }
.lang { align-self: center; margin-right: 21px; }
.tray { display: flex; align-items: center; gap: 4px; padding: 0 16px 0 11px; border-left: 1px solid #0c3c98; background: linear-gradient(#20b0f4 0, #1290e8 5px, #1290e8 25px, #0c68b8 30px); box-shadow: inset 1px 0 #30b8f8; }
.tray svg { width: 14px; height: 16px; }
.tray time { margin-left: 6px; }
```
